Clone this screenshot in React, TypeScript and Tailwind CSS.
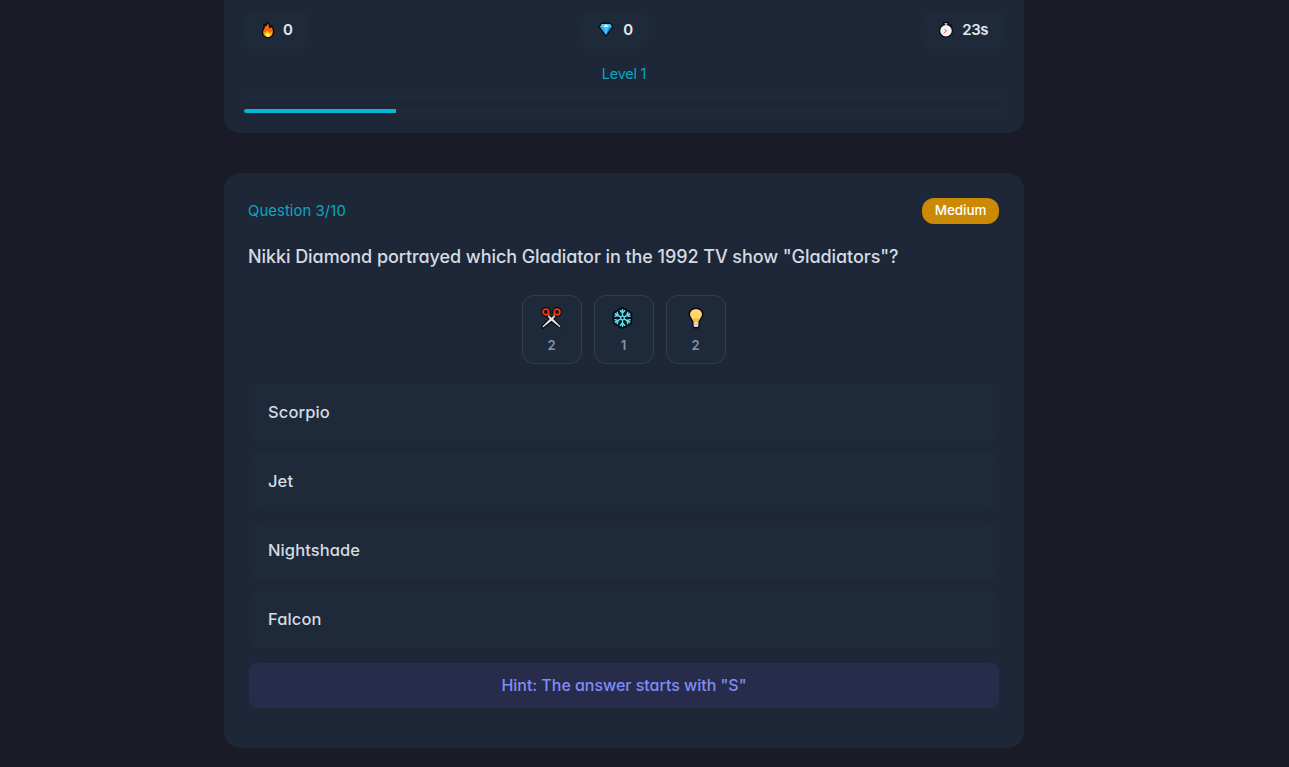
import React from "react";

const FONT = "font-['Inter',sans-serif] [font-feature-settings:'cv11']";

function Flame() {
  return (
    <svg width="14" height="18" viewBox="0 0 14 18">
      <path d="M6.2 1.3C8.4 2.8 8.8 4.7 8.9 6.6C9.6 6.2 9.9 5.4 10 4.6C12 6.5 12.8 8.8 12.6 11C12.4 14.4 10 16.6 7 16.6C3.8 16.6 1.4 14.4 1.4 11.2C1.4 8.6 3.2 7.4 3.4 5.4C3.3 4.4 2.9 3.8 2.6 3.2C3.8 3.2 4.6 3.8 5 4.6C5.6 3.6 6 2.6 6.2 1.3Z" fill="#ff6411" stroke="#090909" strokeWidth="1.3" strokeLinejoin="round" />
      <path d="M3.1 11.2L4.5 12L5.4 9.8L7.1 10.6L8.7 12.1L10.8 11.1C11 14.1 9.3 15.8 7 15.8C4.6 15.8 2.9 13.9 3.1 11.2Z" fill="#ffc700" />
      <path d="M5.2 13.2L7 12.2L8.8 13.5C8.7 15 8.1 15.8 7 15.8C5.9 15.8 5.2 14.9 5.2 13.2Z" fill="#fff6a2" />
    </svg>
  );
}

function Gem() {
  return (
    <svg className="mr-px" width="16" height="18" viewBox="0 0 16 18">
      <path d="M3.6 2.4H12.4L14.8 6L8 15.2L1.2 6Z" fill="#168bd0" stroke="#080b10" strokeWidth="1.3" strokeLinejoin="round" />
      <path d="M3.9 3H12.1L13.8 6H2.2Z" fill="#4cc9f8" />
      <path d="M5.1 6H11L8 14Z" fill="#35c9ff" />
      <path d="M8 3L10.6 6H5.2Z" fill="#dcf8ff" />
      <path d="M2.2 6H5.1L8 14Z" fill="#4a9dea" />
    </svg>
  );
}

function Stopwatch() {
  return (
    <svg width="16" height="18" viewBox="0 0 16 18">
      <path d="M6 1.6H10V4H6ZM12.2 3.4L14 5.2" fill="#d9d9d9" stroke="#080808" strokeWidth="1.4" />
      <circle cx="8" cy="9.8" r="6.4" fill="#f7f3f3" stroke="#080808" strokeWidth="1.3" />
      <path d="M6.8 2.2H9.2V3.8H6.8Z" fill="#c9c9c9" />
      <path d="M6.8 8.2L8.4 9.8" stroke="#555" strokeWidth="1" />
      <path d="M8.4 9.8L5.8 12.4" stroke="#ef4444" strokeWidth="1" />
    </svg>
  );
}

function Scissors() {
  return (
    <svg width="22" height="24" viewBox="0 0 22 24">
      <g fill="none" stroke="#080808" strokeWidth="4">
        <circle cx="4.9" cy="5.9" r="2.8" />
        <circle cx="16" cy="5.9" r="2.8" />
      </g>
      <path d="M8 9.2L10.5 11.6L13 9.2L14.2 10.5L12.2 13L19.6 20.6L19 21.6L10.5 14.9L1.9 21.6L1.4 20.6L8.8 13L6.8 10.5Z" fill="#e2e0e0" stroke="#080808" strokeWidth="2" />
      <path d="M7.8 9.2L10.5 11.7L13.2 9.2L14.3 10.4L12.2 13L19.6 20.6L19 21.4L10.5 14.8L2 21.4L1.4 20.6L8.8 13L6.7 10.4Z" fill="#e6e4e2" />
      <g fill="none" stroke="#f03a17" strokeWidth="1.9">
        <circle cx="4.9" cy="5.9" r="2.8" />
        <circle cx="16" cy="5.9" r="2.8" />
        <path d="M6.7 8L8.8 10M14.2 8L12.1 10" />
      </g>
    </svg>
  );
}

function Snowflake() {
  const arm = "M10.5 11.7V3M7.8 4.2L10.5 6.9L13.2 4.2";
  const angles = [0, 60, 120, 180, 240, 300];
  return (
    <svg className="-ml-[3px]" width="21" height="24" viewBox="0 0 21 24" fill="none" overflow="visible">
      <g stroke="#080b10" strokeWidth="3.8" strokeLinecap="round" strokeLinejoin="round">
        {angles.map((a) => <path key={a} d={arm} transform={`rotate(${a} 10.5 12)`} />)}
      </g>
      <g stroke="#5ee0f4" strokeWidth="1.5">
        {angles.map((a) => <path key={a} d={arm} transform={`rotate(${a} 10.5 12)`} />)}
        <circle cx="10.5" cy="12" r="1.9" strokeWidth="1.1" />
      </g>
      <circle cx="10.5" cy="12" r="1.2" fill="#080b10" />
    </svg>
  );
}

function Bulb() {
  return (
    <svg className="-ml-px" width="16" height="24" viewBox="0 0 16 24">
      <path d="M8 2.2C4.1 2.2 1.3 4.9 1.3 8.5C1.3 12 4.7 13.4 5 16.5V19.7C5 21.2 6.2 21.8 8 21.8C9.8 21.8 11 21.2 11 19.7V16.5C11.3 13.4 14.7 12 14.7 8.5C14.7 4.9 11.9 2.2 8 2.2Z" fill="#ffd371" stroke="#080808" strokeWidth="1.4" />
      <path d="M5.4 12L6.1 16.2H9.9L10.6 12L9.2 13L8 12L6.8 13Z" fill="#f7bd25" />
      <path d="M5.8 16.3H10.2V20.3L8.8 21H7.2L5.8 20.3Z" fill="#dedbe2" />
      <path d="M6 18.3H10" stroke="#aaa8b0" strokeWidth=".8" />
    </svg>
  );
}

function Stat({ icon, value, spacing = "" }: { icon: React.ReactNode; value: string; spacing?: string }) {
  return (
    <div className="flex h-[38px] items-center gap-2 rounded-xl bg-[#1e293a] pl-[17px] pr-4 text-[15px] font-semibold text-slate-200">
      {icon}
      <span className={spacing}>{value}</span>
    </div>
  );
}

function PowerUp({ icon, count }: { icon: React.ReactNode; count: number }) {
  return (
    <button className="flex h-[69px] w-[60px] flex-col items-center rounded-xl border border-[#323e4f] bg-[#1e293a] pt-[10px]">
      {icon}
      <span className="-ml-px mt-[5px] text-[13px] font-semibold leading-5 text-[#8793a5]">{count}</span>
    </button>
  );
}

const answers = ["Scorpio", "Jet", "Nightshade", "Falcon"];

export default function App() {
  return (
    <main className={`flex h-[767px] flex-col overflow-hidden bg-[#1a1b27] pl-56 ${FONT}`}>
      <section className="h-[133px] w-[800px] shrink-0 rounded-b-2xl bg-[#1e2737] px-5 pt-[11px]">
        <div className="flex justify-between">
          <Stat icon={<Flame />} value="0" />
          <Stat icon={<Gem />} value="0" />
          <Stat icon={<Stopwatch />} value="23s" spacing="tracking-[-0.5px]" />
        </div>
        <div className="mt-[15px] h-5 text-center text-[14.4px] leading-5 tracking-[-0.2px] text-[#08a7c2]">
          <span>Level 1</span>
        </div>
        <div className="mt-[11px] h-[6px] rounded-full bg-[#1e293a]" />
        <div className="mt-2 h-1 overflow-hidden rounded-sm bg-[#1e293a]">
          <div className="h-1 w-[152px] bg-[#06b6d4]" />
        </div>
      </section>

      <section className="mt-10 h-[575px] w-[800px] shrink-0 rounded-2xl bg-[#1e2737] px-[25px] pt-[25px]">
        <div className="flex h-[26px] items-center justify-between">
          <span className="-ml-px text-[14.8px] tracking-[0.1px] text-[#08a7c2]">Question 3/10</span>
          <span className="flex h-[26px] w-[77px] items-center justify-center rounded-xl bg-[#ca8a04] pb-px text-[13.4px] font-medium text-white">Medium</span>
        </div>
        <h1 className="-ml-px mt-[19px] h-7 whitespace-nowrap text-[18px] font-medium leading-7 tracking-[-0.07px] text-[#d5dbe4]">
          <span>Nikki Diamond portrayed which Gladiator in the 1992 TV show "Gladiators"?</span>
        </h1>
        <div className="mt-6 flex justify-center gap-3">
          <PowerUp icon={<Scissors />} count={2} />
          <PowerUp icon={<Snowflake />} count={1} />
          <PowerUp icon={<Bulb />} count={2} />
        </div>
        <div className="mt-5 flex flex-col gap-3">
          {answers.map((text) => (
            <button key={text} className="flex h-[57px] items-center rounded-xl bg-[#1e293a] pl-[19px] text-left text-[16.5px] font-medium tracking-[0.1px] text-[#d5dbe4]">
              <span>{text}</span>
            </button>
          ))}
        </div>
        <div className="mt-[15px] flex h-[45px] items-center justify-center rounded-lg bg-[#262c49] pb-[2px] text-[16px] font-medium tracking-[-0.03px] text-[#818cf8]">
          <span>Hint: The answer starts with "S"</span>
        </div>
      </section>
    </main>
  );
}
